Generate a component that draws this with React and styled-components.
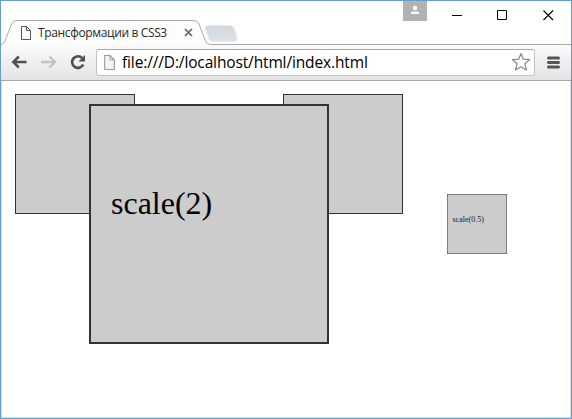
import React from "react";
import styled, { createGlobalStyle } from "styled-components";

const GlobalStyle = createGlobalStyle`
  * { box-sizing: border-box; }
  body { margin: 0; background: #fff; overflow: hidden; }
`;

const Window = styled.div`
  width: 572px;
  height: 419px;
  border: 1px solid #649dce;
  background: #fff;
  display: flex;
  flex-direction: column;
  font-family: "Open Sans", "Noto Sans", sans-serif;
  color: #000;
`;

const TitleBar = styled.header`
  height: 44px;
  flex: none;
  display: flex;
  align-items: flex-end;
  position: relative;
`;

const TabStrip = styled.svg`
  position: absolute;
  left: 0;
  top: 0;
  width: 570px;
  height: 44px;
`;

const Tab = styled.div`
  position: relative;
  width: 206px;
  height: 25px;
  padding-left: 19px;
  display: flex;
  align-items: center;
`;

const TabTitle = styled.span`
  width: 130px;
  margin-left: 6px;
  font-size: 12px;
  line-height: 18px;
  letter-spacing: ${(p) => p.$tracking}px;
  white-space: nowrap;
  color: #2a2a2a;
`;

const TabClose = styled.svg`
  width: 9px;
  height: 9px;
  margin-left: 16px;
`;

const WindowControls = styled.div`
  position: relative;
  align-self: flex-start;
  margin-left: auto;
  display: flex;
  height: 30px;
`;

const UserBadge = styled.div`
  width: 24px;
  height: 20px;
  background: #b2b2b2;
  margin-right: 8px;
`;

const ControlButton = styled.div`
  width: ${(p) => p.$w || 45}px;
  height: 28px;
  display: flex;
  align-items: center;
  justify-content: center;
`;

const Toolbar = styled.nav`
  height: 36px;
  flex: none;
  display: flex;
  align-items: center;
  background: linear-gradient(#fbfbfb, #e3e3e3);
  border-bottom: 1px solid #a6a6a6;
`;

const ToolIcon = styled.svg`
  width: ${(p) => p.$w}px;
  height: 18px;
  margin: 0 0 1px ${(p) => p.$left}px;
  flex: none;
`;

const AddressBar = styled.div`
  width: 439px;
  height: 27px;
  margin-left: 10px;
  padding: 0 0 1px 6px;
  border: 1px solid #c4c4c4;
  border-top-color: #a8a8a8;
  border-radius: 3px;
  background: #fff;
  display: flex;
  align-items: center;
`;

const Address = styled.span`
  margin: 0 1px 1px 6px;
  width: 388px;
  font-size: 15.5px;
  line-height: 22px;
  letter-spacing: ${(p) => p.$tracking}px;
  white-space: nowrap;
`;

const Page = styled.main`
  flex: 1;
  border: 1px solid #dedede;
  border-top: 0;
  padding: 13px;
  display: flex;
  align-items: flex-start;
  gap: 14px;
`;

const Box = styled.div`
  flex: none;
  width: 120px;
  height: 120px;
  padding: ${(p) => p.$textTop ?? 10}px 10px 0;
  border: 1px solid #333;
  background: #ccc;
  margin-top: ${(p) => p.$drop || 0}px;
  font: 16px/18px "Liberation Serif", serif;
  transform: ${(p) => (p.$scale ? `scale(${p.$scale})` : "none")};
`;

const Raised = styled(Box)`
  z-index: 1;
`;

const Faded = styled(Box)`
  color: #222;
`;

const PageIcon = ({ size = 14, stroke = "#555", fill = "none" }) => (
  <svg width={size - 2} height={size} viewBox="0 0 12 14">
    <path d="M1.5.5h5l4 4v9h-9z M6.5.5v4h4" fill={fill} stroke={stroke} />
  </svg>
);

export default function App() {
  return (
    <>
      <GlobalStyle />
      <Window>
        <TitleBar>
          <TabStrip viewBox="1 1 570 44">
            <defs>
              <linearGradient id="newTab" x2="0" y2="1">
                <stop stopColor="#d3d8df" />
                <stop offset="1" stopColor="#dde1e8" />
              </linearGradient>
            </defs>
            <path d="M208.5 25.5H230Q233 25.5 234 28L237 38Q237.5 41.500 234 41.500H213Q210 41.500 209 39L205.500 29Q204.500 25.500 208.500 25.500Z" fill="url(#newTab)" stroke="#e7e9ed" />
            <path d="M1 44.5Q4 44 5 41L11.500 24Q13 20.500 16 20.500H194Q197.500 20.500 199 24L205.500 41Q207 44.500 210 44.500H571V46H1Z" fill="#fdfdfd" />
            <path d="M1 44.500Q4 44 5 41L11.500 24Q13 20.500 16 20.500H194Q197.500 20.500 199 24L205.500 41Q207 44.500 210 44.500H571" fill="none" stroke="#aaa" />
          </TabStrip>
          <Tab>
            <PageIcon />
            <TabTitle $tracking={-0.36}>Трансформации в CSS3</TabTitle>
            <TabClose viewBox="0 0 9 9">
              <path d="M1 1l7 7M8 1L1 8" stroke="#666" strokeWidth="1.7" />
            </TabClose>
          </Tab>
          <WindowControls>
            <UserBadge>
              <svg width="24" height="20" viewBox="0 0 24 20">
                <circle cx="12" cy="7" r="2.200" fill="#fff" />
                <path d="M8 13V12Q8 10.500 10 10.500H14Q16 10.500 16 12V13Z" fill="#fff" />
              </svg>
            </UserBadge>
            <ControlButton>
              <svg width="11" height="11"><path d="M0 5.500h10" stroke="#000" /></svg>
            </ControlButton>
            <ControlButton>
              <svg width="11" height="11"><path d="M.5.500h9v9h-9z" fill="none" stroke="#000" /></svg>
            </ControlButton>
            <ControlButton $w={46}>
              <svg width="11" height="11"><path d="M.5.500l9.500 9.500M10 .5L.5 10" stroke="#000" strokeWidth="1.100" /></svg>
            </ControlButton>
          </WindowControls>
        </TitleBar>
        <Toolbar>
          <ToolIcon $w={16} $left={10} viewBox="0 0 16 18">
            <path d="M15.500 9H2.500M7.800 3.500L2.300 9l5.500 5.500" fill="none" stroke="#505050" strokeWidth="2.500" />
          </ToolIcon>
          <ToolIcon $w={16} $left={14} viewBox="0 0 16 18">
            <path d="M0 9h13M8.500 3.500L14 9l-5.500 5.500" fill="none" stroke="#c3c3c3" strokeWidth="2.400" />
          </ToolIcon>
          <ToolIcon $w={16} $left={13} viewBox="0 0 16 18">
            <path d="M12.300 5.200A5.800 5.800 0 1 0 13.200 11.500" fill="none" stroke="#505050" strokeWidth="2.700" />
            <path d="M15 2v6.500H8.500Z" fill="#505050" />
          </ToolIcon>
          <AddressBar>
            <PageIcon size={15} stroke="#999" fill="#f4f4f4" />
            <Address $tracking={-0.135}>file:///D:/localhost/html/index.html</Address>
            <svg width="20" height="20" viewBox="0 0 20 20">
              <path d="M10 1.500l2.300 5.700 6.200.5-4.700 4 1.700 6.300L10 14.700 4.500 18l1.700-6.300-4.700-4 6.200-.5z" fill="#fff" stroke="#888" strokeWidth="1.200" strokeLinejoin="round" />
            </svg>
          </AddressBar>
          <ToolIcon $w={14} $left={12} viewBox="0 0 14 18">
            <path d="M1.500 5h10M1.500 9.500h10M1.500 14h10" stroke="#555" strokeWidth="3" strokeLinecap="round" />
          </ToolIcon>
        </Toolbar>
        <Page>
          <Box />
          <Raised $drop={70} $scale={2} $textTop={40}>scale(2)</Raised>
          <Box />
          <Faded $drop={70} $scale={0.5} $textTop={40}>scale(0.5)</Faded>
        </Page>
      </Window>
    </>
  );
}
